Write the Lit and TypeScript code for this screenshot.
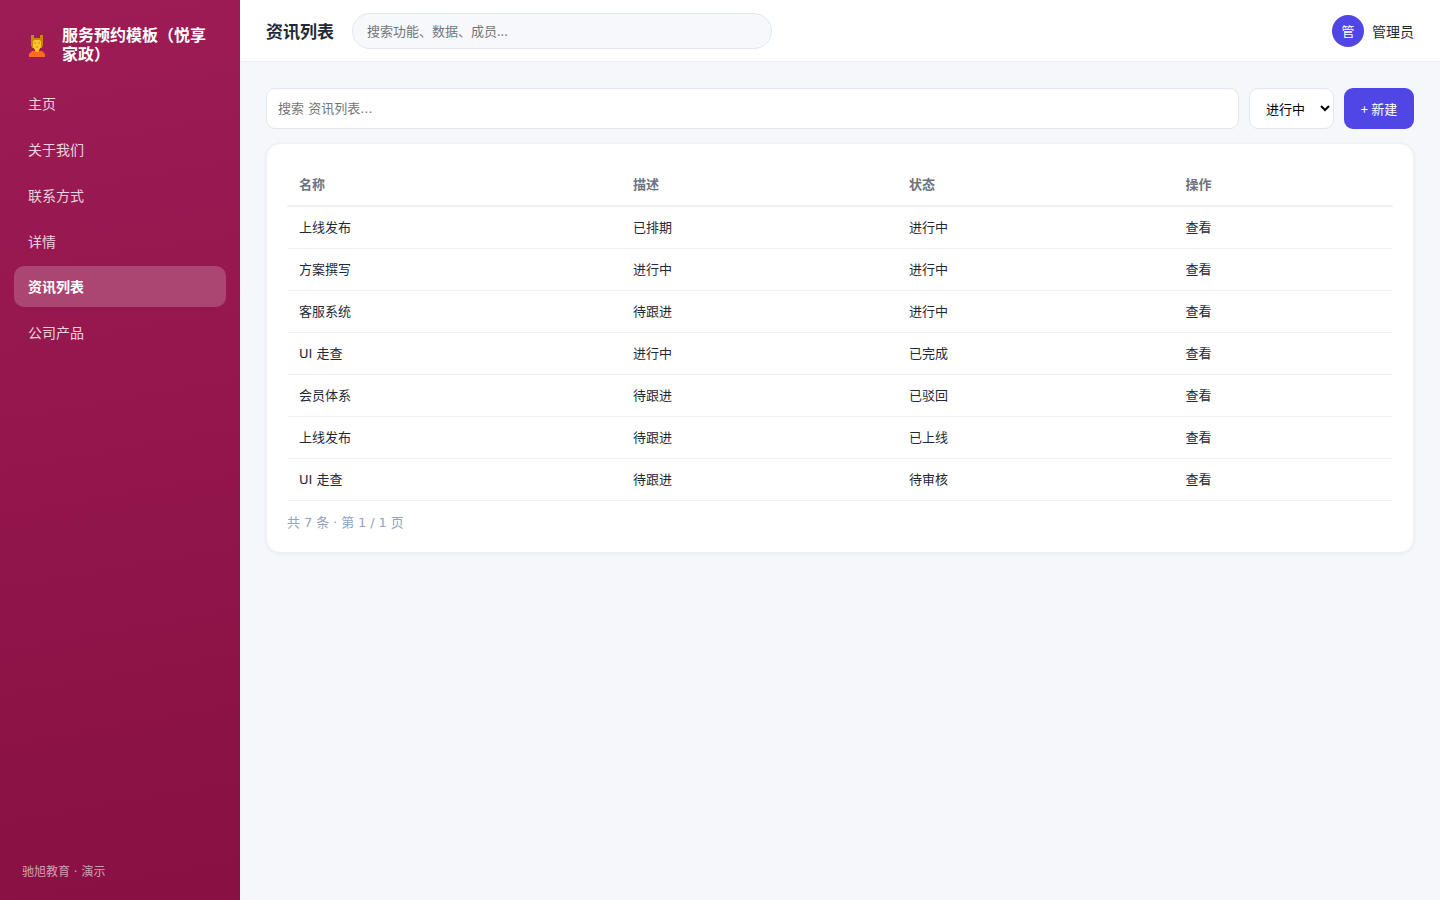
import { LitElement, html, css } from "lit";
import { customElement, state } from "lit/decorators.js";

const NAV = ["主页", "关于我们", "联系方式", "详情", "资讯列表", "公司产品"];

const ROWS = [
  ["上线发布", "已排期", "进行中"],
  ["方案撰写", "进行中", "进行中"],
  ["客服系统", "待跟进", "进行中"],
  ["UI 走查", "进行中", "已完成"],
  ["会员体系", "待跟进", "已驳回"],
  ["上线发布", "待跟进", "已上线"],
  ["UI 走查", "待跟进", "待审核"],
];

@customElement("app-root")
export class AppRoot extends LitElement {
  @state() private active = "资讯列表";

  static styles = css`
    :host {
      display: flex;
      height: 100vh;
      overflow: hidden;
      background: #f5f7fb;
      color: #1f2937;
      font: 14px/20px "Noto Sans CJK SC", sans-serif;
    }
    * { box-sizing: border-box; }
    input, select, button { font-family: inherit; }
    .side {
      width: 240px;
      flex: none;
      display: flex;
      flex-direction: column;
      padding: 26px 14px 18px;
      background: linear-gradient(170deg, #9d1c55, #881042);
      color: #fff;
    }
    .brand {
      display: flex;
      align-items: center;
      gap: 16px;
      height: 38px;
      padding: 0 8px 0 14px;
      font: 700 16px/19px "DejaVu Sans", "Noto Sans CJK SC", sans-serif;
    }
    .logo { width: 18px; height: 24px; flex: none; }
    .nav {
      display: flex;
      flex-direction: column;
      gap: 5px;
      margin-top: 19.2px;
    }
    .item {
      height: 40.8px;
      padding: 0 14px;
      border-radius: 10px;
      line-height: 41px;
      color: rgba(255, 255, 255, 0.82);
      cursor: pointer;
    }
    .item.active {
      background: rgba(255, 255, 255, 0.2);
      color: #fff;
      font-weight: 700;
    }
    .foot {
      margin-top: auto;
      padding-left: 8px;
      font: 12px/20px "DejaVu Sans", "Noto Sans CJK SC", sans-serif;
      color: rgba(255, 255, 255, 0.6);
    }
    .main { flex: 1; min-width: 0; }
    .top {
      display: flex;
      align-items: center;
      height: 62px;
      padding: 0 26px;
      background: #fff;
      border-bottom: 1px solid #eceef3;
    }
    .title {
      margin: 0 18px 0 0;
      font-size: 17px;
      line-height: 24px;
      font-weight: 700;
    }
    .global {
      width: 420px;
      height: 36px;
      padding: 0 14px;
      border: 1px solid #e2e6ef;
      border-radius: 18px;
      background: #f6f8fc;
      font-size: 13px;
    }
    input::placeholder { color: #757575; }
    .user {
      display: flex;
      align-items: center;
      gap: 8px;
      margin-left: auto;
    }
    .avatar {
      width: 32px;
      height: 32px;
      border-radius: 50%;
      background: #4f46e5;
      color: #fff;
      text-align: center;
      line-height: 32px;
    }
    .avatar { font-size: 13px; }
    .body { padding: 26px; }
    .tools { display: flex; gap: 10px; height: 41px; }
    .search {
      flex: 1;
      padding: 0 11px;
      border: 1px solid #e2e6ef;
      border-radius: 9px;
      background: #fff;
      font: 13px "DejaVu Sans", "Noto Sans CJK SC", sans-serif;
    }
    .filter {
      width: 85px;
      padding: 0 0 0 12px;
      border: 1px solid #e2e6ef;
      border-radius: 9px;
      background: #fff;
      color: #000;
      font-size: 13px;
    }
    .create {
      width: 70px;
      padding: 0;
      border: 0;
      border-radius: 9px;
      background: #4f46e5;
      color: #fff;
      font-size: 13px;
      word-spacing: 0.6px;
      white-space: nowrap;
    }
    .card {
      height: 410px;
      margin-top: 14px;
      padding: 20px;
      border: 1px solid #eef0f5;
      border-radius: 14px;
      background: #fff;
      box-shadow: 0 1px 4px rgba(30, 41, 80, 0.05);
    }
    .row {
      display: grid;
      grid-template-columns: 334px 276px 276.5px 1fr;
      align-items: center;
      height: 42px;
      padding-left: 12px;
      border-bottom: 1px solid #eef0f4;
      font: 13px/20px "DejaVu Sans", "Noto Sans CJK SC", sans-serif;
    }
    .row.head {
      height: 43px;
      border-bottom-width: 2px;
      color: #6b7280;
      font-weight: 600;
    }
    .pager {
      margin-top: 12px;
      font: 13px/20px "DejaVu Sans", "Noto Sans CJK SC", sans-serif;
      word-spacing: -0.2px;
      color: #94a3b8;
    }
  `;

  render() {
    return html`
      <aside class="side">
        <div class="brand">
          <svg class="logo" viewBox="0 0 18 24">
            <path d="M3 2h3v3h6V2h3v10l-1 3H4l-1-3z" fill="#c9850c" />
            <path d="M5 8l2-1h4l2 1v6l-2 3v2H7v-2l-2-3z" fill="#fcc42c" />
            <path d="M6 10h2M10 10h2M8 14h2" stroke="#c9850c" />
            <path d="M1 24v-3l3-3h3l2 1 2-1h3l3 3v3z" fill="#ff6a20" />
          </svg>
          <span>服务预约模板（悦享家政）</span>
        </div>
        <nav class="nav">
          ${NAV.map(
            (n) => html`<a
              class="item ${n === this.active ? "active" : ""}"
              @click=${() => (this.active = n)}
              >${n}</a
            >`
          )}
        </nav>
        <div class="foot">驰旭教育 · 演示</div>
      </aside>
      <main class="main">
        <header class="top">
          <h1 class="title">资讯列表</h1>
          <input class="global" placeholder="搜索功能、数据、成员..." />
          <div class="user">
            <span class="avatar">管</span>
            <span>管理员</span>
          </div>
        </header>
        <section class="body">
          <div class="tools">
            <input class="search" placeholder="搜索 资讯列表..." />
            <select class="filter">
              <option>进行中</option>
            </select>
            <button class="create">+ 新建</button>
          </div>
          <div class="card">
            <div class="row head">
              <span>名称</span><span>描述</span><span>状态</span><span>操作</span>
            </div>
            ${ROWS.map(
              (r) => html`<div class="row">
                ${r.map((c) => html`<span>${c}</span>`)}<span>查看</span>
              </div>`
            )}
            <div class="pager">共 7 条 · 第 1 / 1 页</div>
          </div>
        </section>
      </main>
    `;
  }
}
